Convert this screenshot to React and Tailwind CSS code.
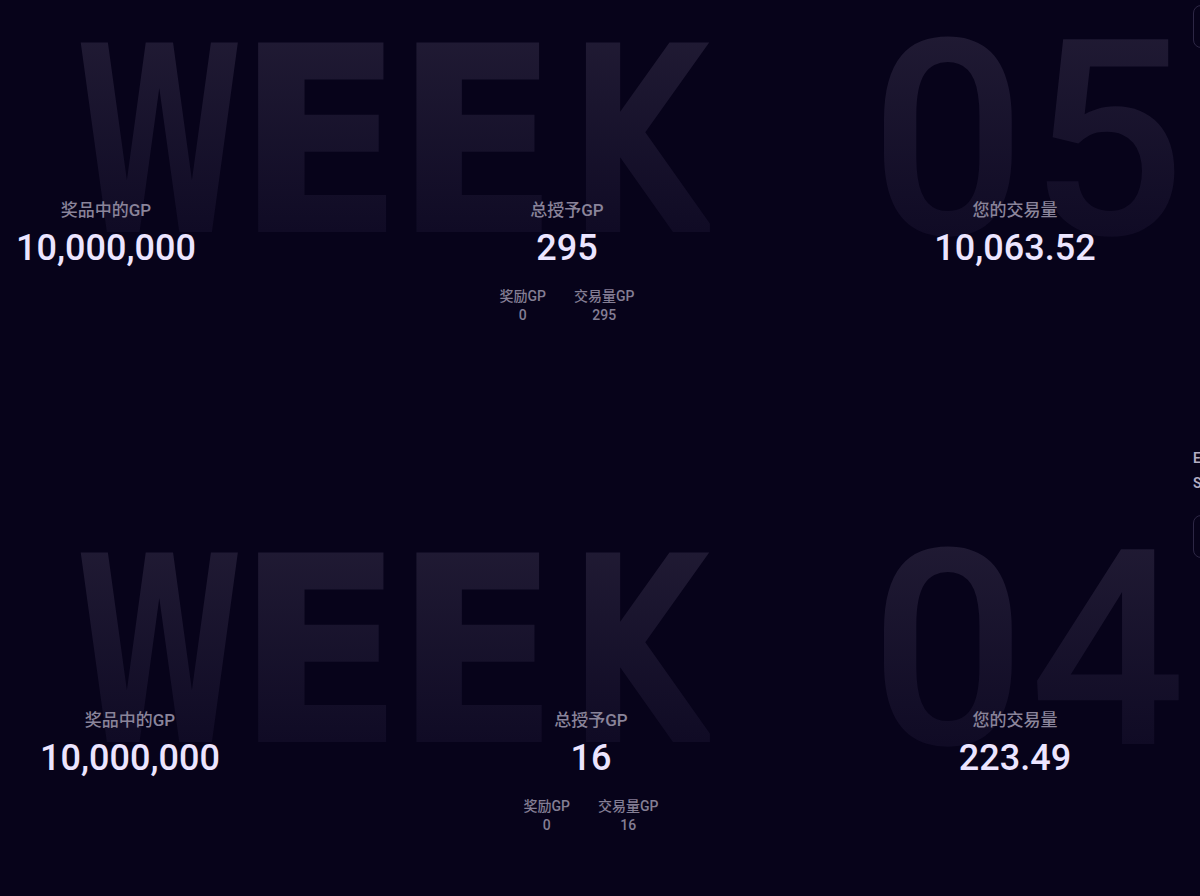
const weeks = [
  {
    week: '05',
    prize: '10,000,000',
    total: '295',
    bonus: '0',
    volumeGp: '295',
    volume: '10,063.52',
    cols: 'grid-cols-[212px_710px_186px]',
  },
  {
    week: '04',
    prize: '10,000,000',
    total: '16',
    bonus: '0',
    volumeGp: '16',
    volume: '223.49',
    cols: 'grid-cols-[260px_662px_186px]',
  },
];

const sans = "font-['Roboto','Noto_Sans_CJK_SC',sans-serif]";
const ghost =
  'select-none leading-none bg-gradient-to-b from-[#221c35] to-[#0d0822] bg-clip-text text-transparent';

// each backdrop letter squeezed into its own box
const letters = [
  { ch: 'W', box: 'w-[155px]', fit: 'scale-x-[0.58]' },
  { ch: 'E', box: 'w-[135px] ml-[15px]', fit: 'scale-x-[0.95]' },
  { ch: 'E', box: 'w-[130px] ml-[25px]', fit: 'scale-x-[0.93]' },
  { ch: 'K', box: 'w-[145px] ml-[25px]', fit: 'scale-x-[0.7]' },
];

const Stat = ({ label, value, children }) => (
  <div className="flex flex-col items-center">
    <div className="text-[17px] leading-6 font-medium text-[#8a849a]">{label}</div>
    <div className="mt-1 text-[36px] leading-[44px] font-medium text-[#ece5ff]">{value}</div>
    {children}
  </div>
);

const WeekBlock = ({ data }) => (
  <div className="relative h-[510px]">
    {/* faded backdrop title */}
    <div className="absolute left-[82px] top-[82px] flex">
      {letters.map((l, i) => (
        <div key={i} className={`flex justify-center ${l.box}`}>
          <span className={`${ghost} ${l.fit} text-[260px] font-bold font-['DejaVu_Sans','Roboto',sans-serif]`}>
            {l.ch}
          </span>
        </div>
      ))}
    </div>
    <div className={`absolute left-[870px] top-[74px] ${ghost} text-[274px] font-medium tracking-[4px] font-['Roboto',sans-serif]`}>
      {data.week}
    </div>

    <div className={`relative grid ${data.cols} pt-[268px] ${sans}`}>
      <Stat label="奖品中的GP" value={data.prize} />
      <Stat label="总授予GP" value={data.total}>
        <div className="mt-[17px] flex gap-7 text-[14px] leading-[19px] font-medium text-[#847e94]">
          <div className="flex flex-col items-center">
            <span>奖励GP</span>
            <span>{data.bonus}</span>
          </div>
          <div className="flex flex-col items-center">
            <span>交易量GP</span>
            <span>{data.volumeGp}</span>
          </div>
        </div>
      </Stat>
      <Stat label="您的交易量" value={data.volume} />
    </div>
  </div>
);

const SidePanel = () => (
  <div className={`h-[510px] pt-[6px] pl-[3px] ${sans}`}>
    <div className="text-[14px] leading-[25px] font-semibold text-[#b3adc2]">Ends in</div>
    <div className="text-[14px] leading-[25px] font-semibold text-[#b3adc2]">Settled</div>
    <div className="mt-[19px] h-[43px] w-[240px] rounded-lg border border-[#2d2745]"></div>
  </div>
);

export default function App() {
  return (
    <div className="w-[1200px] h-[896px] overflow-hidden bg-[#07031a]">
      <div className="flex -mt-[70px]">
        <div className="w-[1190px] shrink-0 overflow-hidden">
          {weeks.map((w) => (
            <WeekBlock key={w.week} data={w} />
          ))}
        </div>
        <div className="w-[300px] shrink-0">
          <SidePanel />
          <SidePanel />
        </div>
      </div>
    </div>
  );
}
